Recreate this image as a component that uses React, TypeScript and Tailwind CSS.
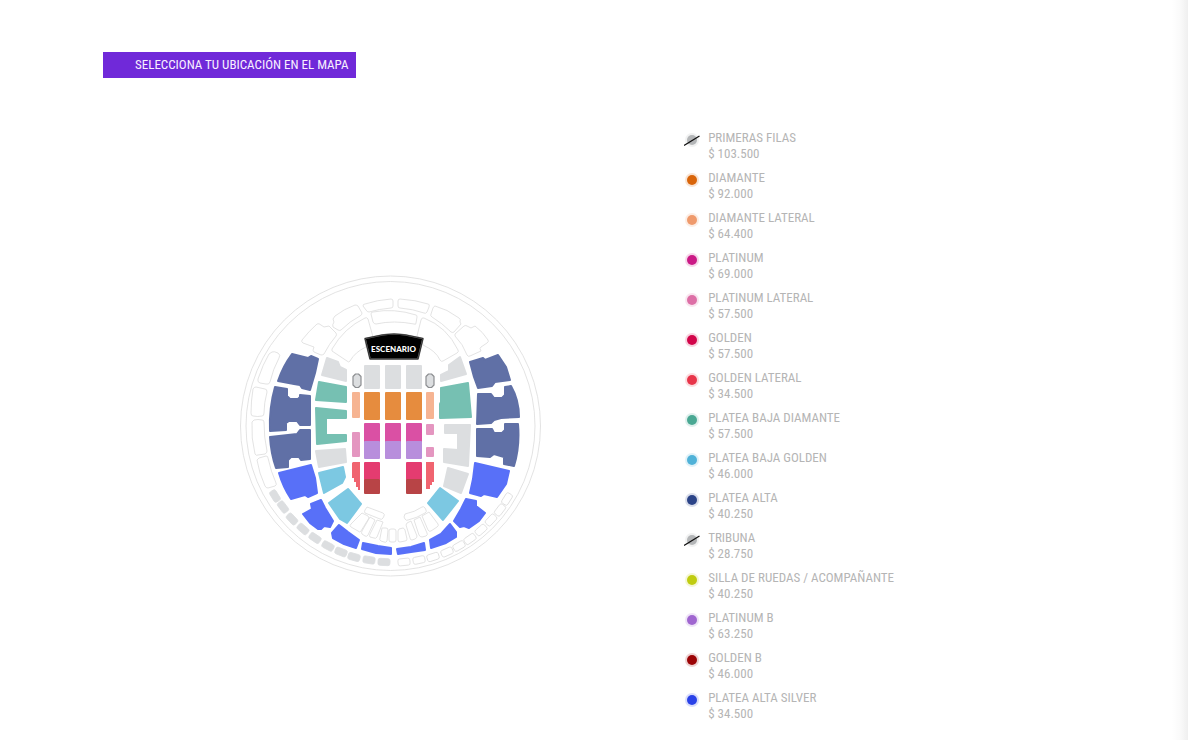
import React from "react"

type Zone = {
  name: string
  price: string
  color: string
  soldOut?: boolean
}

const zones: Zone[] = [
  { name: "PRIMERAS FILAS", price: "$ 103.500", color: "#b4b6b8", soldOut: true },
  { name: "DIAMANTE", price: "$ 92.000", color: "#d9650a" },
  { name: "DIAMANTE LATERAL", price: "$ 64.400", color: "#ef9a6c" },
  { name: "PLATINUM", price: "$ 69.000", color: "#cb1a86" },
  { name: "PLATINUM LATERAL", price: "$ 57.500", color: "#dd6fa6" },
  { name: "GOLDEN", price: "$ 57.500", color: "#d2054a" },
  { name: "GOLDEN LATERAL", price: "$ 34.500", color: "#e8354a" },
  { name: "PLATEA BAJA DIAMANTE", price: "$ 57.500", color: "#4aa893" },
  { name: "PLATEA BAJA GOLDEN", price: "$ 46.000", color: "#50b2d8" },
  { name: "PLATEA ALTA", price: "$ 40.250", color: "#2b4488" },
  { name: "TRIBUNA", price: "$ 28.750", color: "#b4b6b8", soldOut: true },
  { name: "SILLA DE RUEDAS / ACOMPAÑANTE", price: "$ 40.250", color: "#c0cc10" },
  { name: "PLATINUM B", price: "$ 63.250", color: "#a066d0" },
  { name: "GOLDEN B", price: "$ 46.000", color: "#9c0406" },
  { name: "PLATEA ALTA SILVER", price: "$ 34.500", color: "#2a42e8" },
]

const sections = [
  {
    fill: "#6070a6",
    paths: [
      "M56 84L68 87L72 88L75 86L82 89L79 103L74 120L66 118L64 115L58 114L42 111Q47 96 56 84Z",
      "M39 117L51 119V126L54 129H62L64 127V125L74 126V155H64L61 151H53L50 153V160L34 161Q33 138 39 117Z",
      "M34 167L61 164L64 160H74V189L65 190L63 187H55L52 190V197L40 198Q35 184 34 167Z",
      "M234 92L247 88L249 90L262 85L270 97L274 110L259 112L256 116L242 118L238 107Z",
      "M242 124H255L258 128H266L269 125V117L275 116Q283 130 283 147L265 148L258 150L255 153L241 154Z",
      "M241 159H256L258 163H266L269 160V154H282Q284 176 278 196L268 194V187L258 184L254 187L241 186Z",
    ],
  },
  {
    fill: "#5870f8",
    paths: [
      "M43 203L75 195L79 208L81 223L72 227L69 225L55 229Q47 217 43 203Z",
      "M75 234L85 230L89 238L97 251L94 257L88 256L85 259H82L74 253L67 244L76 239Z",
      "M103 255L112 262L123 270L120 278L108 274L97 268L96 263Z",
      "M127 273L142 276L155 278V284L140 283L126 279Z",
      "M161 279L175 277L188 273L189 280L175 282L162 284Z",
      "M194 270L205 264L214 254L220 262V267L210 273L195 278Z",
      "M218 251L225 239L230 229L240 231V236L249 243L243 251L233 258L228 256L224 257Z",
      "M239 193L273 201L270 214L261 227L248 224L245 226L234 223L237 209Z",
    ],
  },
  {
    fill: "#76c0b2",
    paths: [
      "M83 112L110 117V132L80 130Z",
      "M80 138L110 141V148H90V165H110V171L81 174Z",
      "M205 118L232 113L235 147L204 148V134L205 132Z",
    ],
  },
  {
    fill: "#7cc8e2",
    paths: [
      "M83 203L107 197L109 207L106 213L88 223Z",
      "M112 219L125 234L111 253L104 249L93 233Z",
      "M204 218L222 231L207 250L192 233Z",
    ],
  },
  {
    fill: "#dcdee0",
    paths: [
      "M91 88L102 92L104 97L110 100V111L86 105Z",
      "M80 181L109 179L110 192L83 197Z",
      "M224 87L230 104L205 111V105L213 101V95Z",
      "M209 155H234L232 196L208 192V179L222 180V163H209Z",
      "M212 198L232 204L225 223L208 216Z",
    ],
  },
]

// upper rings and side boxes, not on sale
const outlines = [
  "M129 34Q141 30 155 29Q157 29 157 31V36Q157 38 155 38Q143 39 133 42Q131 42 130 40L127 36Q127 34 129 34Z",
  "M164 29Q180 30 192 34Q194 34 193 37L191 42Q190 44 188 43Q177 39 164 38Q162 38 162 36V31Q162 29 164 29Z",
  "M99 46Q108 39 119 35Q121 35 122 36L126 43Q126 45 124 46Q114 51 105 60Q104 61 102 60L97 57Q96 55 98 52L97 49Z",
  "M66 70Q73 61 81 54Q83 53 85 55L88 57L93 56L100 63Q101 65 100 66Q93 74 88 84Q87 85 85 85L78 82Q76 81 78 77L67 73Q65 72 66 70Z",
  "M96 79Q108 58 129 48Q131 47 132 49L137 67L129 69L130 77Q119 82 114 91Q113 93 111 91L96 81Z",
  "M137 42Q158 38 180 45Q181 45 181 47L180 53Q180 55 178 54Q158 50 140 54Q138 54 137 52L135 44Q135 42 137 42Z",
  "M199 36Q211 39 223 48Q225 49 224 52L225 54L218 62Q217 63 215 62Q206 53 196 47Q194 46 195 44L197 38Q198 36 199 36Z",
  "M219 64L228 56Q230 55 231 56L235 58L239 56Q247 62 252 70Q253 72 251 73L245 77Q243 78 245 81L234 86Q232 87 231 85Q227 74 219 66Z",
  "M188 48Q211 57 222 80Q223 82 221 83L207 91Q205 92 204 90Q200 81 187 75L186 69L181 66L185 50Q186 47 188 48Z",
  "M36 82Q38 81 42 83Q45 85 43 88Q37 99 34 112Q33 115 30 114L24 113Q21 112 22 109Q27 94 33 84Z",
  "M20 117L29 119Q31 119 31 122Q28 133 28 143Q28 146 26 146Q22 147 17 146Q15 146 15 143Q15 131 17 119Q18 117 20 117Z",
  "M18 150Q22 149 26 150Q28 150 28 152Q28 168 31 181Q31 183 29 184L22 185Q20 186 19 184Q15 168 16 152Z",
  "M23 188L30 186Q32 186 32 188Q35 202 40 213Q41 215 39 216L32 218Q30 218 29 216Q23 203 21 190Z",
  "M131 237L147 243Q149 244 148 246L147 248Q146 250 144 249L129 243Q128 242 129 240Z",
  "M126 243L132 246L133 248L125 261Q124 263 122 261L115 257Q113 256 115 254Z",
  "M134 247L139 250L132 265Q131 267 129 266L126 264Q125 263 126 261Z",
  "M141 250L147 252L141 267Q140 269 138 268L134 267Q133 266 134 264Z",
  "M146 258H150Q152 258 152 260L151 271Q150 273 148 272L145 271Q143 270 144 268Z",
  "M155 259H158Q160 259 160 261V270Q160 272 158 272H155Q153 272 153 270V261Q153 259 155 259Z",
  "M163 259L167 258Q168 258 169 260L171 269Q171 271 169 271L164 272Q162 272 162 270V261Z",
  "M171 253L175 251L181 266Q181 268 179 269L176 270Q174 270 174 268L170 255Z",
  "M178 250L184 247L191 263Q192 265 190 266L186 267Q184 267 183 265Z",
  "M186 246L193 242L202 254Q203 256 201 257L195 261Q193 262 192 260Z",
  "M169 244Q179 242 186 237Q188 236 189 238L190 240Q191 242 189 243Q181 248 172 250Q170 251 169 249L168 247Z",
]

const soldBoxes = [
  [39, 226], [47, 237], [56, 249], [67, 259], [79, 268],
  [92, 276], [105, 282], [118, 287], [133, 290], [148, 292],
]

const freeBoxes = [
  [168, 292], [183, 290], [197, 287], [211, 282], [223, 276],
  [234, 269], [245, 260], [255, 250], [264, 240], [271, 229],
]

const blocks = [
  { x: 128, y: 95, w: 16, h: 24, fill: "#dcdee0" },
  { x: 149, y: 95, w: 16, h: 24, fill: "#dcdee0" },
  { x: 170, y: 95, w: 16, h: 24, fill: "#dcdee0" },
  { x: 128, y: 122, w: 16, h: 28, fill: "#e68c3e" },
  { x: 149, y: 122, w: 16, h: 28, fill: "#e68c3e" },
  { x: 170, y: 122, w: 16, h: 28, fill: "#e68c3e" },
  { x: 128, y: 153, w: 16, h: 20, fill: "#da50a4" },
  { x: 149, y: 153, w: 16, h: 20, fill: "#da50a4" },
  { x: 170, y: 153, w: 16, h: 20, fill: "#da50a4" },
  { x: 128, y: 171, w: 16, h: 18, fill: "#b88edc" },
  { x: 149, y: 171, w: 16, h: 18, fill: "#b88edc" },
  { x: 170, y: 171, w: 16, h: 18, fill: "#b88edc" },
  { x: 128, y: 192, w: 16, h: 18, fill: "#e43c70" },
  { x: 170, y: 192, w: 16, h: 18, fill: "#e43c70" },
  { x: 128, y: 209, w: 16, h: 15, fill: "#b84446" },
  { x: 170, y: 209, w: 16, h: 15, fill: "#b84446" },
  { x: 116, y: 122, w: 8, h: 26, fill: "#f6b492" },
  { x: 190, y: 122, w: 8, h: 27, fill: "#f6b492" },
  { x: 116, y: 162, w: 8, h: 25, fill: "#e496c0" },
  { x: 190, y: 154, w: 8, h: 11, fill: "#e496c0" },
  { x: 190, y: 177, w: 8, h: 10, fill: "#e496c0" },
]

function RingBox({ x, y, fill, stroke }: { x: number; y: number; fill: string; stroke: string }) {
  const angle = (Math.atan2(y - 156, x - 154.5) * 180) / Math.PI + 90
  return (
    <rect
      x={-6}
      y={-3.5}
      width={12}
      height={7}
      rx={2}
      fill={fill}
      stroke={stroke}
      strokeWidth={0.8}
      transform={`translate(${x} ${y}) rotate(${angle})`}
    />
  )
}

function VenueMap() {
  return (
    <svg
      viewBox="0 0 309 312"
      className="mx-auto w-full max-w-[309px]"
      role="img"
      aria-label="Mapa de ubicaciones"
    >
      <g fill="none" stroke="#dcdcdc" strokeWidth={0.8} strokeLinejoin="round">
        <circle cx={154.5} cy={156} r={150} />
        <circle cx={154.5} cy={156} r={144.5} />
        {outlines.map((d) => (
          <path key={d} d={d} />
        ))}
      </g>
      {soldBoxes.map(([x, y]) => (
        <RingBox key={x} x={x} y={y} fill="#dcdee0" stroke="#dcdee0" />
      ))}
      {freeBoxes.map(([x, y]) => (
        <RingBox key={x} x={x} y={y} fill="#fff" stroke="#dcdcdc" />
      ))}
      {sections.map(({ fill, paths }) => (
        <g key={fill} fill={fill} stroke={fill} strokeWidth={2} strokeLinejoin="round">
          {paths.map((d) => (
            <path key={d} d={d} />
          ))}
        </g>
      ))}
      {blocks.map(({ x, y, w, h, fill }) => (
        <rect key={`${x}-${y}`} x={x} y={y} width={w} height={h} rx={1} fill={fill} />
      ))}
      <g fill="#f06470">
        <path d="M117 192H124V220H122V217H120V212H118V208H116V193Z" />
        <path d="M190 192H198V212H196V215H194V219H190Z" />
      </g>
      <g fill="#dcdee0" stroke="#8c8e91" strokeWidth={1.2} strokeLinejoin="round">
        <path d="M119.5 104H122.500L125 106.500V115L122.500 117.500H119.500L117 115V106.500Z" />
        <path d="M192.500 104H195.500L198 106.500V115L195.500 117.500H192.500L190 115V106.500Z" />
      </g>
      <path
        d="M129 68.500L146 65Q158 63 170 65L187 68.500L182 89H134Z"
        fill="#000"
        stroke="#777"
        strokeWidth={1.6}
        strokeLinejoin="round"
      />
      <path
        d="M129 68.500L146 65Q158 63 170 65L187 68.500L182 89H134Z"
        fill="none"
        stroke="#111"
        strokeWidth={0.7}
        strokeLinejoin="round"
      />
      <text
        x={157.500}
        y={81.500}
        textAnchor="middle"
        className="fill-white font-['Lato',sans-serif] text-[8px] font-black"
      >
        ESCENARIO
      </text>
    </svg>
  )
}

function ZoneItem({ name, price, color, soldOut }: Zone) {
  return (
    <li className="flex items-start gap-2">
      <svg viewBox="0 0 16 16" className="mt-0.5 size-4 shrink-0" aria-hidden="true">
        <circle cx={8} cy={8} r={7} fill={color} opacity={0.18} />
        <circle cx={8} cy={8} r={5} fill={color} />
        {soldOut && <path d="M0 13.500L15.500 4" stroke="#111" strokeWidth={1.3} />}
      </svg>
      <div>
        <p>{name}</p>
        <p>{price}</p>
      </div>
    </li>
  )
}

export default function App() {
  return (
    <div className="min-h-screen bg-white bg-[linear-gradient(to_left,#efefef,#fafafa_8px,#fff_16px)] pt-[52px] pr-[99px] pb-4 pl-[103px] font-['Roboto_Condensed','Roboto',sans-serif]">
      <h1 className="w-fit bg-[#7029d9] pr-2 pl-8 text-[13px] leading-[26px] font-normal text-[#f8f0ff]">
        SELECCIONA TU UBICACIÓN EN EL MAPA
      </h1>
      <main className="mt-[52px] grid grid-cols-[7fr_5fr] items-center">
        <VenueMap />
        <ul className="flex flex-col gap-2 pl-1.5 text-[13px] leading-4 text-[#b5b5b5]">
          {zones.map((zone) => (
            <ZoneItem key={zone.name} {...zone} />
          ))}
        </ul>
      </main>
    </div>
  )
}
